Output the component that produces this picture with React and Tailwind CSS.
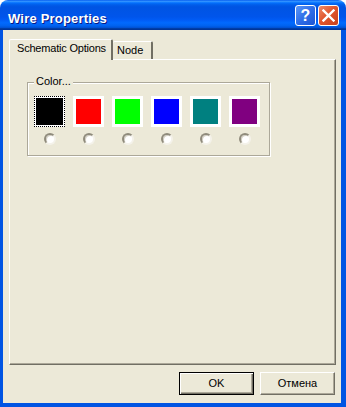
import React from 'react';

const swatches = [
  { color: 'bg-[#000000]', focused: true },
  { color: 'bg-[#ff0000]' },
  { color: 'bg-[#00ff00]' },
  { color: 'bg-[#0000ff]' },
  { color: 'bg-[#008080]' },
  { color: 'bg-[#800080]' },
];

const Radio = () => (
  <div className="w-[12px] h-[12px] rounded-full bg-white border-[2px] border-t-[#8f8b7c] border-l-[#8f8b7c] border-r-[#f4f2ea] border-b-[#f4f2ea] shadow-[inset_1px_1px_0_#d4d0c4]" />
);

const Swatch = ({ color, focused }) => (
  <div className="flex flex-col items-center">
    {focused ? (
      <div className="w-[31px] h-[31px] border border-dotted border-black bg-white p-[1px]">
        <div className={`w-full h-full ${color}`} />
      </div>
    ) : (
      <div className="w-[31px] h-[31px] bg-white p-[3px]">
        <div className={`w-full h-full ${color}`} />
      </div>
    )}
    <div className="mt-[6px]">
      <Radio />
    </div>
  </div>
);

const Button = ({ label, isDefault }) => (
  <button
    className={
      isDefault
        ? 'w-[75px] h-[23px] bg-[#ece9d8] border border-black shadow-[inset_1px_1px_0_#ffffff,inset_-1px_-1px_0_#716f64,inset_-2px_-2px_0_#aca899] text-[11px] leading-none text-black'
        : 'w-[75px] h-[23px] bg-[#ece9d8] border border-t-white border-l-white border-r-[#716f64] border-b-[#716f64] shadow-[inset_-1px_-1px_0_#aca899] text-[11px] leading-none text-black'
    }
  >
    {label}
  </button>
);

export default function App() {
  return (
    <div className="w-[346px] h-[407px] bg-white font-['Liberation_Sans',Arial,sans-serif]">
      <div className="flex flex-col w-[346px] h-[407px] rounded-t-[8px] overflow-hidden">
        {/* title bar */}
        <div className="h-[30px] flex items-start pl-[8px] pr-[7px] bg-[linear-gradient(180deg,#0058ee_0%,#3593ff_4%,#288eff_6%,#127dff_8%,#036ffc_10%,#0262ee_14%,#0057e5_20%,#0054e3_24%,#0055eb_56%,#005bf5_66%,#026afe_76%,#0062ef_86%,#0052d6_92%,#0040ab_94%,#003092_100%)]">
          <span className="mt-[11px] text-[13px] leading-[15px] font-bold text-white tracking-[0.2px] [text-shadow:1px_1px_0_#0a1883]">
            Wire Properties
          </span>
          <div className="ml-auto mt-[5px] flex gap-[2px]">
            <div className="w-[21px] h-[21px] rounded-[3px] border border-white bg-[linear-gradient(135deg,#5b96f7_0%,#2f6ee8_50%,#1d55d3_100%)] flex items-center justify-center">
              <span className="text-white font-bold text-[16px] leading-none">?</span>
            </div>
            <div className="w-[21px] h-[21px] rounded-[3px] border border-white bg-[linear-gradient(135deg,#ef8c6a_0%,#e0562f_45%,#c7401c_100%)] flex items-center justify-center">
              <svg width="13" height="13" viewBox="0 0 13 13">
                <path d="M1.5 1.5 L11.5 11.5 M11.5 1.5 L1.5 11.5" stroke="#fff" strokeWidth="2.4" strokeLinecap="square" />
              </svg>
            </div>
          </div>
        </div>

        {/* body */}
        <div className="flex-1 flex flex-col bg-[#ece9d8] border-l-[3px] border-r-[5px] border-b-[4px] border-[#0054e3] pl-[6px] pr-[5px] pt-[9px] pb-[8px] text-[11px] text-black">
          {/* tabs */}
          <div className="flex items-end h-[20px]">
            <div className="relative z-10 -mb-px w-[104px] h-[21px] bg-[#ece9d8] border-l border-t border-white border-r-[2px] border-r-[#716f64] rounded-t-[2px] pl-[7px] pt-[2px] leading-[13px] tracking-[-0.2px] whitespace-nowrap">
              Schematic Options
            </div>
            <div className="w-[40px] h-[18px] bg-[#ece9d8] border-t border-white border-r-[2px] border-r-[#716f64] rounded-t-[2px] pl-[4px] pt-[2px] leading-[13px]">
              Node
            </div>
          </div>

          {/* panel */}
          <div className="h-[306px] border-l border-t border-white border-r border-b border-r-[#716f64] border-b-[#716f64] shadow-[inset_-1px_-1px_0_#aca899] pl-[17px] pt-[22px]">
            <div className="relative w-[243px] h-[74px] border border-[#aca899] shadow-[inset_1px_1px_0_#ffffff,1px_1px_0_#ffffff] pl-[6px] pt-[13px]">
              <span className="absolute -top-[8px] left-[6px] bg-[#ece9d8] px-[2px] leading-[13px]">
                Color...
              </span>
              <div className="flex gap-[8px]">
                {swatches.map((s, i) => (
                  <Swatch key={i} color={s.color} focused={s.focused} />
                ))}
              </div>
            </div>
          </div>

          {/* buttons */}
          <div className="mt-[7px] flex justify-end gap-[6px] mr-[1px]">
            <Button label="OK" isDefault />
            <Button label="Отмена" />
          </div>
        </div>
      </div>
    </div>
  );
}
